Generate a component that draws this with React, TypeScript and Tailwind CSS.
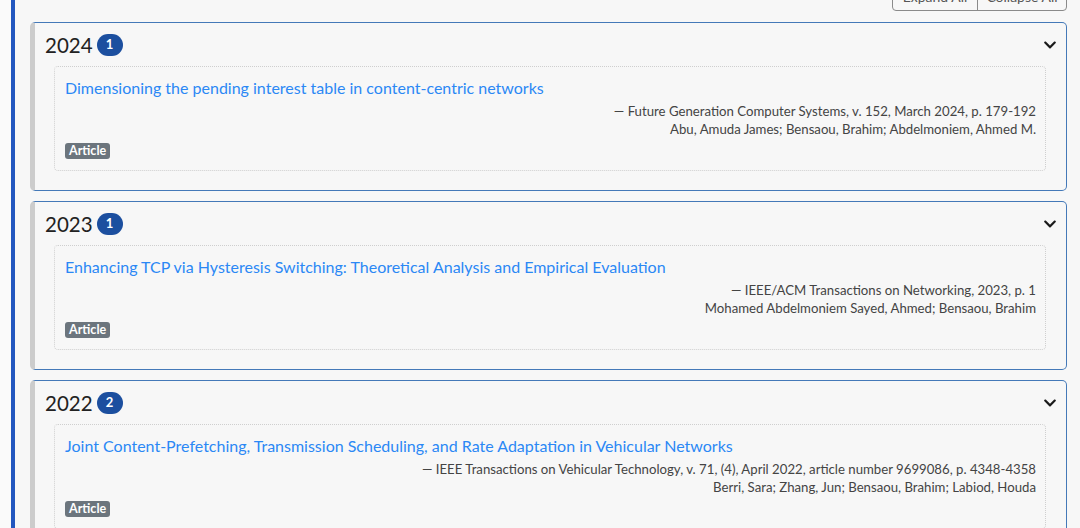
import { FaChevronDown } from "react-icons/fa";

interface Pub {
  title: string;
  source: string;
  authors: string;
  type: string;
}
interface YearGroup {
  year: string;
  pubs: Pub[];
}

const GROUPS: YearGroup[] = [
  {
    year: "2024",
    pubs: [
      {
        title: "Dimensioning the pending interest table in content-centric networks",
        source: "Future Generation Computer Systems, v. 152, March 2024, p. 179-192",
        authors: "Abu, Amuda James; Bensaou, Brahim; Abdelmoniem, Ahmed M.",
        type: "Article",
      },
    ],
  },
  {
    year: "2023",
    pubs: [
      {
        title: "Enhancing TCP via Hysteresis Switching: Theoretical Analysis and Empirical Evaluation",
        source: "IEEE/ACM Transactions on Networking, 2023, p. 1",
        authors: "Mohamed Abdelmoniem Sayed, Ahmed; Bensaou, Brahim",
        type: "Article",
      },
    ],
  },
  {
    year: "2022",
    pubs: [
      {
        title: "Joint Content-Prefetching, Transmission Scheduling, and Rate Adaptation in Vehicular Networks",
        source: "IEEE Transactions on Vehicular Technology, v. 71, (4), April 2022, article number 9699086, p. 4348-4358",
        authors: "Berri, Sara; Zhang, Jun; Bensaou, Brahim; Labiod, Houda",
        type: "Article",
      },
      {
        title: "Cache-aware scheduling in vehicular content delivery",
        source: "IEEE Transactions on Vehicular Technology, 2022",
        authors: "Berri, Sara; Bensaou, Brahim",
        type: "Article",
      },
    ],
  },
];

export default function App() {
  return (
    <div
      className="w-full h-[528px] overflow-hidden bg-[#fafafa] text-[#333]"
      style={{ fontFamily: "Lato, 'Noto Sans', sans-serif" }}
    >
      <div className="ml-[11px] border-l-[4px] border-[#2357bf] bg-[#f7f7f7] min-h-full pl-[15px] pr-[13px]">
        {/* Toolbar */}
        <div className="flex justify-end -mt-[14px] mb-[11px]">
          <div className="flex border border-[#8a8a8a] rounded-b-[4px] text-[14px] text-[#555] leading-[19px]">
            <button className="w-[84px] pb-[4px] text-center">Expand All</button>
            <button className="w-[89px] pb-[4px] text-center border-l border-[#8a8a8a]">Collapse All</button>
          </div>
        </div>

        <div className="flex flex-col gap-[10px]">
          {GROUPS.map(g => (
            <div
              key={g.year}
              className="bg-[#f7f7f7] border border-[#4479b8] border-l-[5px] border-l-[#cccccc] rounded-[5px] pl-[10px] pr-[20px] pt-[10px] pb-[19px]"
            >
              {/* Header */}
              <div className="flex items-center h-[24px] mb-[9px] relative">
                <span className="text-[20.5px] leading-[24px] text-[#222]">{g.year}</span>
                <span className="ml-[4px] h-[22px] min-w-[26px] px-[8px] rounded-full bg-[#1c4f9f] text-white text-[13px] font-bold flex items-center justify-center">
                  {g.pubs.length}
                </span>
                <FaChevronDown className="absolute right-[-11px] top-[5px] text-[#1a1a1a]" size={14} />
              </div>

              {/* Items */}
              <div className="ml-[9px] flex flex-col gap-[10px]">
                {g.pubs.map(p => (
                  <div
                    key={p.title}
                    className="border border-dotted border-[#cfcfcf] rounded-[4px] pl-[10px] pr-[9px] pt-[10px] pb-[11px]"
                  >
                    <a className="block text-[16px] leading-[22px] text-[#2b88f5]">{p.title}</a>
                    <div className="text-right text-[13.2px] leading-[18px] text-[#444] mt-[3px]">
                      — {p.source}
                    </div>
                    <div className="text-right text-[13.2px] leading-[18px] text-[#444]">{p.authors}</div>
                    <div className="flex mt-[5px]">
                      <span className="bg-[#6c757d] text-white text-[12.5px] font-bold leading-[16px] px-[4px] rounded-[3px]">
                        {p.type}
                      </span>
                    </div>
                  </div>
                ))}
              </div>
            </div>
          ))}
        </div>
      </div>
    </div>
  );
}
